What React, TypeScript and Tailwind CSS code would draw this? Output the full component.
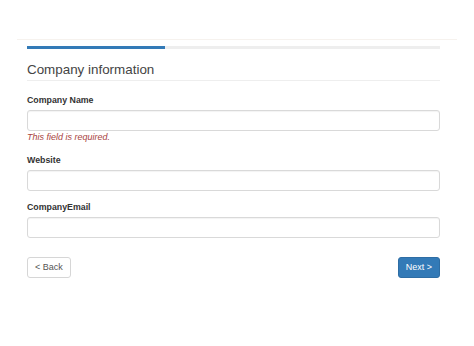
import React from 'react';

const font = { fontFamily: '"Liberation Sans", Arial, sans-serif' };

const Field: React.FC<{ label: string; className: string; error?: string }> = ({ label, className, error }) => (
  <div className={className}>
    <label className="block text-[8.8px] leading-[12px] font-bold text-[#333]">{label}</label>
    <input
      type="text"
      className="mt-[4px] block w-full h-[21px] border border-[#d9d9d9] rounded-[3px] bg-white shadow-[inset_0_1px_1px_rgba(0,0,0,0.05)] outline-none"
    />
    {error && <p className="text-[9px] leading-[12px] italic text-[#a94442]">{error}</p>}
  </div>
);

export default function App() {
  return (
    <div className="min-h-[346px] bg-white pt-[39px]" style={font}>
      <div className="ml-[17px] w-[440px] border-t border-[#f6f2ee]">
        <div className="pl-[10px] pr-[17px]">
          {/* progress */}
          <div className="mt-[6px] h-[3px] bg-[#eeeeee] flex">
            <div className="w-[138px] h-full bg-[#337ab7]" />
          </div>

          <h2 className="mt-[13px] pb-[2px] border-b border-[#eeeeee] text-[13.4px] leading-[16px] text-[#444] font-normal">
            Company information
          </h2>

          <Field label="Company Name" className="mt-[13px]" error="This field is required." />
          <Field label="Website" className="mt-[11px]" />
          <Field label="CompanyEmail" className="mt-[10px]" />

          <div className="mt-[19px] flex justify-between">
            <button className="h-[21px] w-[44px] border border-[#d6d6d6] rounded-[3px] bg-white text-[9px] text-[#555]">
              &lt; Back
            </button>
            <button className="h-[21px] w-[42px] border border-[#2e6da4] rounded-[3px] bg-[#337ab7] text-[9px] text-white">
              Next &gt;
            </button>
          </div>
        </div>
      </div>
    </div>
  );
}
